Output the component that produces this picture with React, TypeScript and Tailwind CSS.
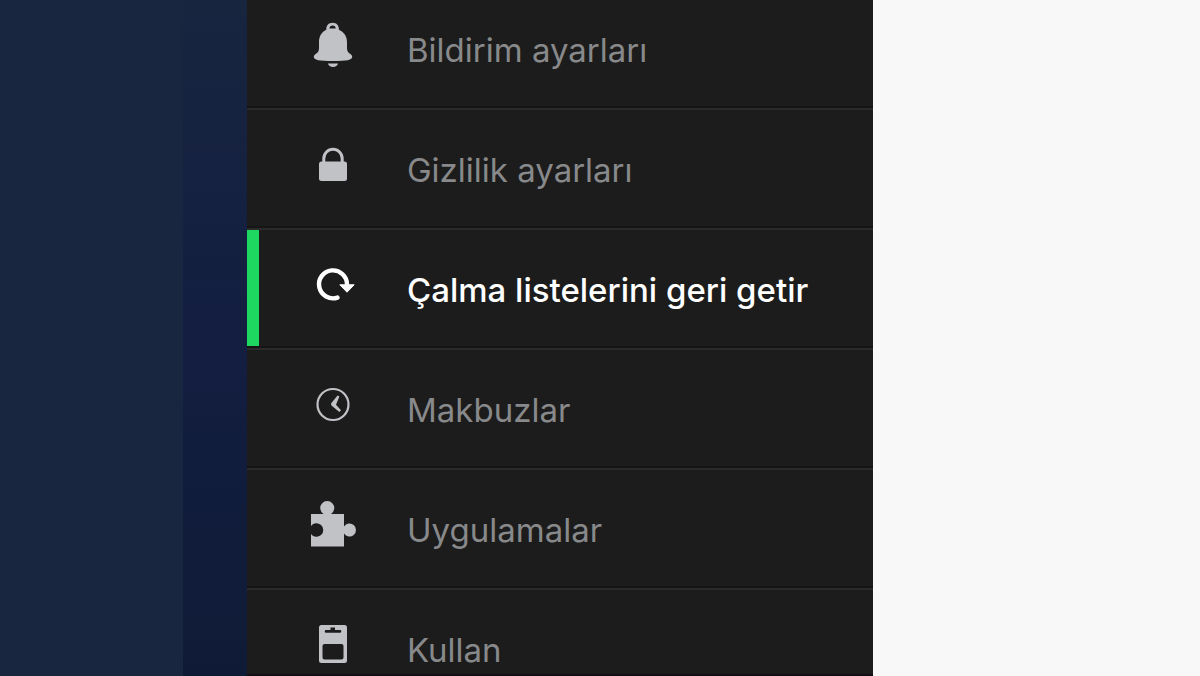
import React from 'react';
import clsx from 'clsx';

interface MenuItem {
  label: string;
  Icon: React.FC;
  active?: boolean;
}

const iconClass = 'mt-0.5 h-14 w-12 shrink-0';

const BellIcon: React.FC = () => (
  <svg viewBox="0 0 48 56" fill="currentColor" className={iconClass} aria-hidden="true">
    <path fillRule="evenodd" d="M17.3 8.8C17 4.6 19.6 1.8 23.6 1.8s6.6 2.8 6.3 7C35 11 38 15.5 38 21v6c0 3 1 4.5 3 5.7 1.5.9 2.2 1.8 2.2 3C43.2 39 38 40 24 40S4.8 39 4.8 35.7c0-1.2.7-2.1 2.2-3 2-1.2 3-2.7 3-5.7v-6c0-5.5 2.6-10 7.3-12.2Zm3.2-1.2h6.2c0-2-1.2-3.2-3.1-3.2s-3.1 1.2-3.1 3.2Z" />
    <path d="M19 42.6h10c-.5 2.200-2.400 3.400-5 3.400s-4.500-1.200-5-3.400Z" />
  </svg>
);

const LockIcon: React.FC = () => (
  <svg viewBox="0 0 48 56" className={iconClass} aria-hidden="true">
    <rect x="10" y="20.500" width="28" height="19.600" rx="2.500" fill="currentColor" />
    <path d="M14.800 22v-4.500a9.200 9.200 0 0 1 18.400 0V22" fill="none" stroke="currentColor" strokeWidth="3" />
  </svg>
);

const RestoreIcon: React.FC = () => (
  <svg viewBox="0 0 48 56" className={iconClass} aria-hidden="true">
    <path d="M28.500 36.600a14 14 0 1 1 9.500-13.100v2" fill="none" stroke="currentColor" strokeWidth="4.400" strokeLinecap="round" />
    <path d="M30.800 23.800h14.400L38 31.200Z" fill="currentColor" stroke="currentColor" strokeWidth="1" strokeLinejoin="round" />
  </svg>
);

const ClockIcon: React.FC = () => (
  <svg viewBox="0 0 48 56" className={iconClass} aria-hidden="true">
    <circle cx="24" cy="23.500" r="15.500" fill="none" stroke="currentColor" strokeWidth="2.200" />
    <path d="M28.600 14.400 23 21.200a2.500 2.500 0 0 0 0 3.900l7.400 6 1.600-1.800-5-5.600 3.400-8.100Z" fill="currentColor" />
  </svg>
);

const PuzzleIcon: React.FC = () => (
  <svg viewBox="0 0 48 56" fill="currentColor" className={iconClass} aria-hidden="true">
    <path d="M2 13h12.500a7 7 0 1 1 7.500 0h13v12.500a6.500 6.500 0 1 1 0 7V45.500H2V33a6.800 6.800 0 1 0 0-8Z" />
  </svg>
);

const CardIcon: React.FC = () => (
  <svg viewBox="0 0 48 56" fill="currentColor" className={iconClass} aria-hidden="true">
    <path fillRule="evenodd" d="M12.500 4h23a2.500 2.500 0 0 1 2.500 2.500v33a2.500 2.500 0 0 1-2.500 2.500h-23a2.500 2.500 0 0 1-2.500-2.500v-33a2.500 2.500 0 0 1 2.500-2.500Zm9 2.500v2.600H17a1.300 1.300 0 0 0 0 2.600h14a1.300 1.300 0 0 0 0-2.600h-5V6.500ZM15.500 23a2 2 0 0 0-2 2v11.600a2 2 0 0 0 2 2h17a2 2 0 0 0 2-2V25a2 2 0 0 0-2-2Z" />
  </svg>
);

const MENU_ITEMS: MenuItem[] = [
  { label: 'Bildirim ayarları', Icon: BellIcon },
  { label: 'Gizlilik ayarları', Icon: LockIcon },
  { label: 'Çalma listelerini geri getir', Icon: RestoreIcon, active: true },
  { label: 'Makbuzlar', Icon: ClockIcon },
  { label: 'Uygulamalar', Icon: PuzzleIcon },
  { label: 'Kullan', Icon: CardIcon },
];

const MenuLink: React.FC<{ item: MenuItem }> = ({ item: { label, Icon, active } }) => (
  <li>
    <a
      href="#"
      aria-current={active ? 'page' : undefined}
      className="flex h-30 items-stretch border-t-2 border-b-2 border-t-[#2a2a2a] border-b-[#151515]"
    >
      <span className={clsx('w-3 shrink-0', active && 'bg-[#1ed760]')} />
      <span className={clsx('flex items-center pl-12.5', active ? 'text-white' : 'text-[#c1c2c6]')}>
        <Icon />
        <span className={clsx('pt-1.5 pl-12.5 text-[33px] whitespace-nowrap', active ? 'font-medium text-white' : 'text-[#88898b]')}>
          {label}
        </span>
      </span>
    </a>
  </li>
);

export default function App() {
  return (
    <div className="flex h-screen overflow-hidden bg-[#f8f8f8] font-['Inter',sans-serif]">
      <div className="w-[183px] shrink-0 bg-[#18263f]" />
      <div className="w-16 shrink-0 bg-linear-to-b from-[#18253f] via-[#131e41] to-[#0f1b36]" />
      <nav aria-label="Hesap" className="w-[626px] shrink-0 overflow-hidden border-b-2 border-[#150d14] bg-[#1c1c1c]">
        {/* The list is scrolled slightly past its first row */}
        <ul className="-mt-3">
          {MENU_ITEMS.map((item) => (
            <MenuLink key={item.label} item={item} />
          ))}
        </ul>
      </nav>
      <main className="flex-1" />
    </div>
  );
}
